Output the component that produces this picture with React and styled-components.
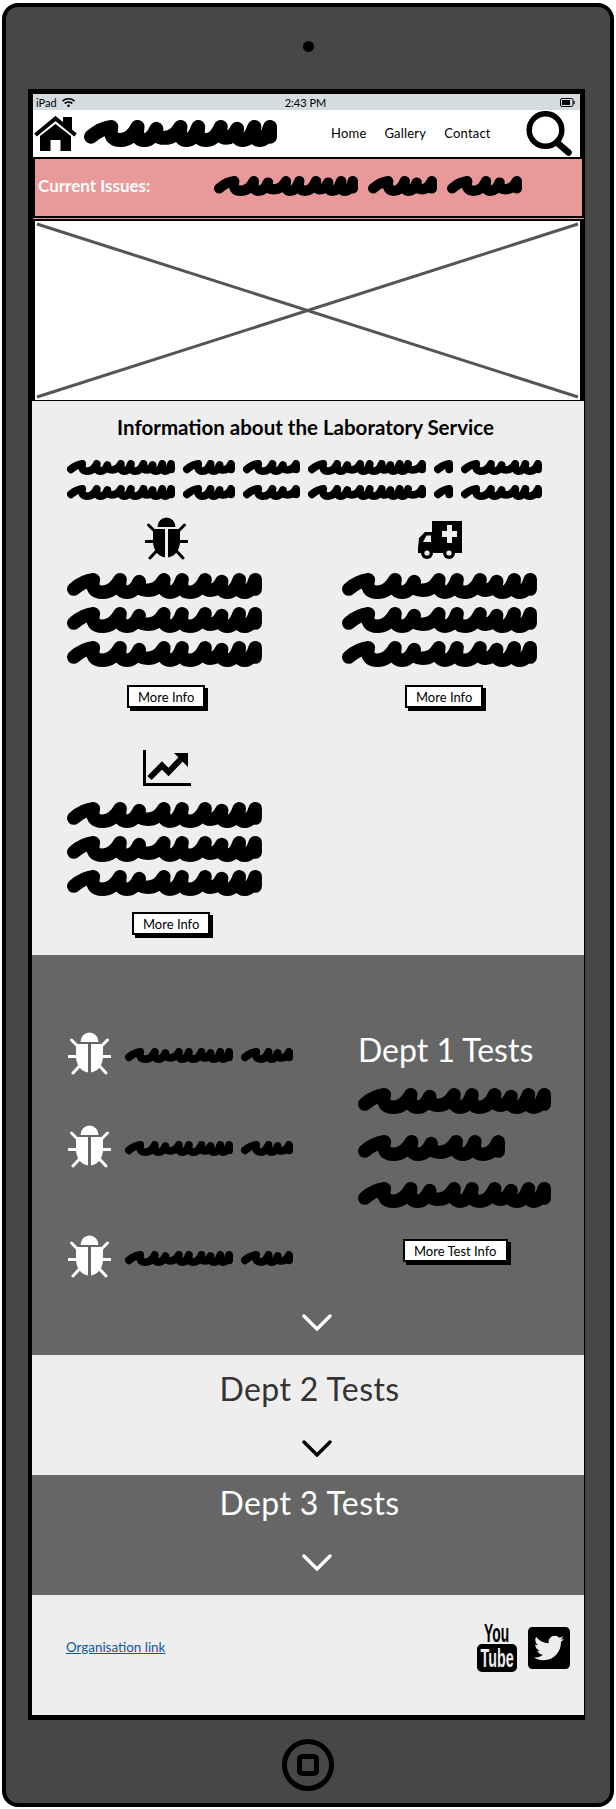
import React from "react";
import styled, { createGlobalStyle } from "styled-components";
import { FaWifi, FaTwitterSquare } from "react-icons/fa";

const FONT = `"Lato", "Noto Sans", sans-serif`;

const App = () => {
  return (
    <>
      <GlobalStyle />
      <Device>
        <CameraZone>
          <Camera />
        </CameraZone>
        <Frame>
          <StatusBar>
            <StatusLeft>
              iPad <FaWifi size={13} />
            </StatusLeft>
            <span>2:43 PM</span>
            <StatusRight>
              <BatteryIcon />
            </StatusRight>
          </StatusBar>
          <Nav>
            <HomeIcon />
            <Scribble w={193} h={27} $left={7} />
            <NavLinks>
              <NavLink>Home</NavLink>
              <NavLink>Gallery</NavLink>
              <NavLink>Contact</NavLink>
            </NavLinks>
            <SearchIcon />
          </Nav>
          <Banner>
            <BannerLabel>Current Issues:</BannerLabel>
            <WordRow $gap={10}>
              <Scribble w={144} h={20} />
              <Scribble w={69} h={20} />
              <Scribble w={75} h={20} />
            </WordRow>
          </Banner>
          <Placeholder>
            <PlaceholderCross viewBox="0 0 545 179" preserveAspectRatio="none">
              <line x1="2" y1="3" x2="543" y2="176" />
              <line x1="543" y1="3" x2="2" y2="176" />
            </PlaceholderCross>
          </Placeholder>

          <InfoSection>
            <InfoTitle>Information about the Laboratory Service</InfoTitle>
            <IntroLines>
              {[0, 1].map((i) => (
                <WordRow key={i} $gap={8}>
                  {[108, 52, 57, 118, 19, 81].map((w, j) => (
                    <Scribble key={j} w={w} h={15} />
                  ))}
                </WordRow>
              ))}
            </IntroLines>
            <CardGrid>
              <Card>
                <IconSlot $shift={4}>
                  <BugIcon />
                </IconSlot>
                <ScribbleBlock />
                <MoreButton $shift={60}>More Info</MoreButton>
              </Card>
              <Card>
                <IconSlot>
                  <AmbulanceIcon />
                </IconSlot>
                <ScribbleBlock />
                <MoreButton $shift={63}>More Info</MoreButton>
              </Card>
              <Card>
                <IconSlot $shift={5}>
                  <ChartIcon />
                </IconSlot>
                <ScribbleBlock />
                <MoreButton $shift={65} $top={16}>
                  More Info
                </MoreButton>
              </Card>
            </CardGrid>
          </InfoSection>

          <DarkSection>
            <DeptGrid>
              <BugList>
                <BugRow>
                  <BugIcon $light />
                  <BugWords />
                </BugRow>
                <BugRow $top={50}>
                  <BugIcon $light />
                  <BugWords />
                </BugRow>
                <BugRow $top={67}>
                  <BugIcon $light />
                  <BugWords />
                </BugRow>
              </BugList>
              <DeptDetail>
                <DeptHeading $color="#fff">Dept 1 Tests</DeptHeading>
                <DetailLines>
                  <Scribble w={193} h={26} />
                  <Scribble w={147} h={26} />
                  <Scribble w={193} h={26} />
                </DetailLines>
                <MoreButton $shift={45} $top={31}>
                  More Test Info
                </MoreButton>
              </DeptDetail>
            </DeptGrid>
            <ChevronRow $top={36}>
              <Chevron color="#fff" />
            </ChevronRow>
          </DarkSection>

          <DeptPanel $bg="#eee" $top={14}>
            <DeptHeading $color="#333" $center>
              Dept 2 Tests
            </DeptHeading>
            <ChevronRow $top={31}>
              <Chevron color="#000" />
            </ChevronRow>
          </DeptPanel>
          <DeptPanel $bg="#666" $top={8}>
            <DeptHeading $color="#fff" $center>
              Dept 3 Tests
            </DeptHeading>
            <ChevronRow $top={31}>
              <Chevron color="#fff" />
            </ChevronRow>
          </DeptPanel>

          <Footer>
            <OrgLink href="#">Organisation link</OrgLink>
            <Socials>
              <YouTube>
                <YouWord>You</YouWord>
                <TubeBox>
                  <TubeWord>Tube</TubeWord>
                </TubeBox>
              </YouTube>
              <FaTwitterSquare size={48} color="#000" />
            </Socials>
          </Footer>
        </Frame>
        <HomeZone>
          <HomeButton>
            <HomeSquare />
          </HomeButton>
        </HomeZone>
      </Device>
    </>
  );
};

// scribbled-out text, the wireframe's stand-in for copy
const TOOTH = [1.0, 0.72, 0.92, 0.68, 0.86, 0.62, 0.66, 0.6];

const scribblePath = (w, h, r) => {
  const lead = h * 0.75;
  const inner = w - 2 * r - lead;
  const teeth = [];
  let sum = 0;
  while (sum < inner - h * 0.3) {
    const t = TOOTH[teeth.length % TOOTH.length] * h;
    teeth.push(t);
    sum += t;
  }
  const fit = inner / sum;
  const low = h - r;
  let x = r + lead;
  let d = `M${r} ${(h * 0.62).toFixed(1)} Q${(r + lead * 0.5).toFixed(1)} ${(h * 0.3).toFixed(1)} ${x.toFixed(1)} ${r.toFixed(1)}`;
  teeth.forEach((t, i) => {
    const dx = t * fit;
    const bot = low - (i % 3 === 2 ? h * 0.08 : 0);
    const top = r + (i % 4 === 1 ? h * 0.07 : 0);
    d += ` Q${(x - dx * 0.1).toFixed(1)} ${bot.toFixed(1)} ${(x + dx * 0.35).toFixed(1)} ${bot.toFixed(1)}`;
    d += ` Q${(x + dx * 0.75).toFixed(1)} ${bot.toFixed(1)} ${(x + dx).toFixed(1)} ${top.toFixed(1)}`;
    x += dx;
  });
  return `${d} L${x.toFixed(1)} ${(h * 0.62).toFixed(1)}`;
};

const Scribble = ({ w, h, $left }) => {
  const r = h * 0.26;
  return (
    <ScribbleSvg width={w} height={h} viewBox={`0 0 ${w} ${h}`} $left={$left}>
      <path
        d={scribblePath(w, h, r)}
        fill="none"
        stroke="#000"
        strokeWidth={r * 2}
        strokeLinecap="round"
        strokeLinejoin="round"
      />
    </ScribbleSvg>
  );
};

const ScribbleBlock = () => (
  <BlockLines>
    <Scribble w={195} h={26} />
    <Scribble w={195} h={26} />
    <Scribble w={195} h={26} />
  </BlockLines>
);

const BugWords = () => (
  <BugWordRow $gap={8}>
    <Scribble w={108} h={15} />
    <Scribble w={52} h={15} />
  </BugWordRow>
);

const BugIcon = ({ $light }) => {
  const c = $light ? "#fff" : "#000";
  return (
    <svg width="43" height="43" viewBox="0 0 43 43" style={{ flexShrink: 0 }}>
      <path d="M12.5 10 A9 9.5 0 0 1 30.5 10 Z" fill={c} />
      <path d="M8 12 H20 V40.5 C13 39.5 8 33 8 24 Z" fill={c} />
      <path d="M35 12 H23 V40.5 C30 39.5 35 33 35 24 Z" fill={c} />
      <path
        d="M3.5 8 L11 15.5 M39.5 8 L32 15.5 M1 24.5 H10 M42 24.5 H33 M5 41 L12 33.5 M38 41 L31 33.5"
        stroke={c}
        strokeWidth="3"
        strokeLinecap="round"
      />
    </svg>
  );
};

const AmbulanceIcon = () => (
  <svg width="46" height="40" viewBox="0 -2 46 40">
    <path d="M15 0 H45 V32 H1 V27 L2 17 L8 11 H15 Z" fill="#000" />
    <path d="M6 21 L9.5 14.5 H14 V21 Z" fill="#eee" />
    <path d="M30 4 H35 V10 H40 V16 H35 V22 H30 V16 H25 V10 H30 Z" fill="#eee" />
    <circle cx="10" cy="32" r="6" fill="#000" />
    <circle cx="10" cy="32" r="2.6" fill="#eee" />
    <circle cx="32" cy="32" r="6" fill="#000" />
    <circle cx="32" cy="32" r="2.6" fill="#eee" />
  </svg>
);

const ChartIcon = () => (
  <svg width="48" height="36" viewBox="0 0 48 36">
    <path d="M1.5 0 V34.5 H48" fill="none" stroke="#000" strokeWidth="3" />
    <path d="M6.5 28 L19 15.5 L25.5 22 L39 8" fill="none" stroke="#000" strokeWidth="6" />
    <path d="M31 3 H45 V17 Z" fill="#000" />
  </svg>
);

const HomeIcon = () => (
  <HomeSvg width="43" height="35" viewBox="0 0 43 35">
    <path d="M29 1 H38 V15 L29 7 Z" fill="#000" />
    <path d="M1.5 19 L21.5 2.5 L41.5 19" fill="none" stroke="#000" strokeWidth="4" />
    <path d="M6 20 L21.5 8 L37 20 V35 H26.5 V24 H16.5 V35 H6 Z" fill="#000" />
  </HomeSvg>
);

const SearchIcon = () => (
  <SearchSvg width="46" height="45" viewBox="0 0 46 45">
    <circle cx="19.5" cy="19" r="16.3" fill="none" stroke="#000" strokeWidth="5.5" />
    <path d="M31 31.5 L42.5 41.5" stroke="#000" strokeWidth="6.5" strokeLinecap="round" />
  </SearchSvg>
);

const BatteryIcon = () => (
  <svg width="15" height="9" viewBox="0 0 15 9">
    <rect x="0.5" y="0.5" width="12.5" height="8" rx="1.5" fill="none" stroke="#000" />
    <rect x="2" y="2" width="8" height="5" fill="#000" />
    <rect x="13.5" y="3" width="1.2" height="3" fill="#000" />
  </svg>
);

const Chevron = ({ color }) => (
  <svg width="30" height="17" viewBox="0 0 30 17">
    <path d="M2 2 L15 15 L28 2" fill="none" stroke={color} strokeWidth="3.4" strokeLinecap="round" />
  </svg>
);

// STYLED COMPONENTS

const GlobalStyle = createGlobalStyle`
  html, body {
    margin: 0;
    padding: 0;
    background: #fff;
    font-family: ${FONT};
  }
`;

const Device = styled.div`
  box-sizing: border-box;
  width: 612px;
  height: 1804px;
  margin: 3px 2px 2px;
  border: 4px solid #000;
  border-radius: 16px;
  background: #474747;
  display: flex;
  flex-direction: column;
`;

const CameraZone = styled.div`
  height: 82px;
  display: flex;
  justify-content: center;
  padding-top: 34px;
  box-sizing: border-box;
`;

const Camera = styled.div`
  width: 11px;
  height: 11px;
  border-radius: 50%;
  background: #000;
`;

const Frame = styled.div`
  box-sizing: border-box;
  width: 557px;
  height: 1631px;
  margin-left: 22px;
  padding: 5px 1px 5px 4px;
  background: #000;
  display: flex;
  flex-direction: column;
`;

const StatusBar = styled.div`
  box-sizing: border-box;
  height: 16px;
  margin: 0 4px 0 1px;
  padding: 0 5px 0 3px;
  background: #d5dce0;
  display: grid;
  grid-template-columns: 1fr auto 1fr;
  align-items: center;
  font-size: 11px;
  color: #000;
`;

const StatusLeft = styled.div`
  display: flex;
  align-items: center;
  gap: 5px;
`;

const StatusRight = styled.div`
  display: flex;
  justify-content: flex-end;
`;

const Nav = styled.div`
  box-sizing: border-box;
  height: 47px;
  margin: 0 4px 0 1px;
  padding: 0 8px 0 1px;
  background: #fff;
  display: flex;
  align-items: center;
`;

const HomeSvg = styled.svg`
  flex-shrink: 0;
`;

const SearchSvg = styled.svg`
  flex-shrink: 0;
  margin-left: auto;
`;

const ScribbleSvg = styled.svg`
  display: block;
  flex-shrink: 0;
  margin-left: ${(p) => p.$left || 0}px;
`;

const NavLinks = styled.div`
  display: flex;
  gap: 18px;
  margin: -2px 0 0 54px;
`;

const NavLink = styled.span`
  font-size: 13px;
  letter-spacing: 0.2px;
  color: #000;
`;

const Banner = styled.div`
  box-sizing: border-box;
  height: 61px;
  margin-left: 1px;
  padding: 0 0 4px 3px;
  background: #e99999;
  border: 2px solid #000;
  box-shadow: 0 1px 0 #e99999;
  display: flex;
  align-items: center;
`;

const BannerLabel = styled.div`
  width: 176px;
  font-size: 17px;
  font-weight: 700;
  color: #fff;
`;

const WordRow = styled.div`
  display: flex;
  gap: ${(p) => p.$gap}px;
`;

const Placeholder = styled.div`
  box-sizing: border-box;
  width: 549px;
  height: 183px;
  margin: 1px 0 -1px 1px;
  background: #fff;
  border: 2px solid #000;
`;

const PlaceholderCross = styled.svg`
  display: block;
  width: 100%;
  height: 100%;
  line {
    stroke: #555;
    stroke-width: 3;
  }
`;

const InfoSection = styled.section`
  box-sizing: border-box;
  height: 554px;
  padding-top: 14px;
  background: #eee;
`;

const InfoTitle = styled.h2`
  margin: 0;
  padding-right: 5px;
  font-size: 20.5px;
  line-height: 24px;
  font-weight: 700;
  text-align: center;
  color: #000;
`;

const IntroLines = styled.div`
  display: flex;
  flex-direction: column;
  gap: 10px;
  margin: 21px 0 17px 35px;
`;

const CardGrid = styled.div`
  display: grid;
  grid-template-columns: 275px 195px;
  row-gap: 38px;
  padding-left: 35px;
`;

const Card = styled.div`
  width: 195px;
`;

const IconSlot = styled.div`
  box-sizing: border-box;
  height: 43px;
  margin-bottom: 13px;
  padding-left: ${(p) => p.$shift || 0}px;
  display: flex;
  justify-content: center;
  align-items: center;
`;

const BlockLines = styled.div`
  display: flex;
  flex-direction: column;
  gap: 8px;
`;

const MoreButton = styled.button`
  display: block;
  box-sizing: border-box;
  height: 23px;
  margin: ${(p) => (p.$top === undefined ? 18 : p.$top)}px 0 0 ${(p) => p.$shift}px;
  padding: 0 9px;
  background: #fff;
  border: 2px solid #000;
  box-shadow: 3px 3px 0 #000;
  font-family: ${FONT};
  font-size: 13px;
  color: #000;
  white-space: nowrap;
`;

const DarkSection = styled.section`
  box-sizing: border-box;
  height: 400px;
  padding-top: 75px;
  background: #666;
`;

const DeptGrid = styled.div`
  display: grid;
  grid-template-columns: 326px 1fr;
`;

const BugList = styled.div`
  padding: 2px 0 0 36px;
`;

const BugRow = styled.div`
  display: flex;
  align-items: center;
  gap: 14px;
  margin-top: ${(p) => p.$top || 0}px;
`;

const BugWordRow = styled(WordRow)`
  margin-top: 4px;
`;

const DeptDetail = styled.div``;

const DeptHeading = styled.h3`
  margin: 0;
  font-size: 32px;
  line-height: 40px;
  font-weight: 400;
  color: ${(p) => p.$color};
  text-align: ${(p) => (p.$center ? "center" : "left")};
  padding-left: ${(p) => (p.$center ? "3px" : "0")};
  letter-spacing: ${(p) => (p.$center ? "0.4px" : "0")};
`;

const DetailLines = styled.div`
  display: flex;
  flex-direction: column;
  gap: 21px;
  margin-top: 18px;
`;

const ChevronRow = styled.div`
  display: flex;
  justify-content: center;
  padding-left: 18px;
  margin-top: ${(p) => p.$top}px;
  svg {
    display: block;
  }
`;

const DeptPanel = styled.section`
  box-sizing: border-box;
  height: 120px;
  padding-top: ${(p) => p.$top}px;
  background: ${(p) => p.$bg};
`;

const Footer = styled.footer`
  box-sizing: border-box;
  height: 120px;
  padding: 28px 11px 0 34px;
  background: #eee;
  display: flex;
  justify-content: space-between;
  align-items: flex-start;
`;

const OrgLink = styled.a`
  margin-top: 14px;
  font-size: 13.4px;
  line-height: 20px;
  color: #0b5a9e;
  text-decoration: underline;
`;

const Socials = styled.div`
  display: flex;
  align-items: center;
  gap: 8px;
  height: 49px;
`;

const YouTube = styled.div`
  width: 40px;
  height: 49px;
  display: flex;
  flex-direction: column;
  align-items: center;
`;

const YouWord = styled.span`
  font-family: "Liberation Sans", sans-serif;
  font-weight: 700;
  font-size: 26px;
  line-height: 21px;
  color: #000;
  transform: scaleX(0.53);
`;

const TubeBox = styled.div`
  width: 40px;
  height: 28px;
  border-radius: 5px;
  background: #000;
  display: flex;
  justify-content: center;
  align-items: center;
`;

const TubeWord = styled.span`
  font-family: "Liberation Sans", sans-serif;
  font-weight: 700;
  font-size: 26px;
  line-height: 28px;
  color: #eee;
  transform: scaleX(0.55);
`;

const HomeZone = styled.div`
  flex: 1;
  display: flex;
  justify-content: center;
  padding-top: 19px;
`;

const HomeButton = styled.div`
  box-sizing: border-box;
  width: 52px;
  height: 52px;
  border: 5px solid #000;
  border-radius: 50%;
  display: flex;
  align-items: center;
  justify-content: center;
`;

const HomeSquare = styled.div`
  box-sizing: border-box;
  width: 22px;
  height: 22px;
  border: 5px solid #000;
  border-radius: 5px;
`;

export default App;
